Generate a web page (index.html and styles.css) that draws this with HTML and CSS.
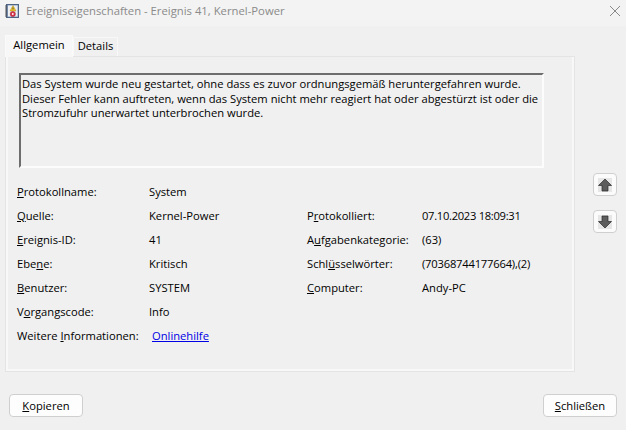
FILE: index.html
```html
<!DOCTYPE html>
<html lang="de">
<head>
<meta charset="utf-8">
<title>Ereigniseigenschaften</title>
<link rel="stylesheet" href="styles.css">
</head>
<body>
<div class="window">
  <header class="titlebar">
    <svg class="appicon" width="14" height="14" viewBox="0 0 14 14">
      <rect x="1.5" y="0.5" width="12" height="13" fill="#7f9cc4" stroke="#4f6384"/>
      <rect x="3" y="1.5" width="9.5" height="11" fill="#eef0f2"/>
      <path d="M0 2h2.5M0 4h2.5M0 6h2.5M0 8h2.5M0 10h2.5M0 12h2.5" stroke="#555" stroke-width="1" fill="none"/>
      <path d="M8 1.5l3 5.5h-6z" fill="#f3c72c" stroke="#a98510" stroke-width=".5"/>
      <rect x="7.6" y="3.5" width=".8" height="2" fill="#333"/>
      <circle cx="7.8" cy="10" r="2.6" fill="#d8344a" stroke="#9a1f30" stroke-width=".5"/>
      <circle cx="7.8" cy="10" r=".9" fill="#fff"/>
    </svg>
    <span class="title">Ereigniseigenschaften - Ereignis 41, Kernel-Power</span>
    <svg class="close" width="10" height="10" viewBox="0 0 10 10"><path d="M0 0l10 10M10 0L0 10" stroke="#8a8a8a" stroke-width="1" fill="none"/></svg>
  </header>
  <div class="content">
    <div class="main">
      <div class="tabs">
        <div class="tab active">Allgemein</div>
        <div class="tab">Details</div>
      </div>
      <section class="panel">
        <div class="description">Das System wurde neu gestartet, ohne dass es zuvor ordnungsgemäß heruntergefahren wurde. Dieser Fehler kann auftreten, wenn das System nicht mehr reagiert hat oder abgestürzt ist oder die Stromzufuhr unerwartet unterbrochen wurde.</div>
        <div class="fields">
          <span class="label"><u>P</u>rotokollname:</span><span class="value">System</span><span></span><span></span>
          <span class="label"><u>Q</u>uelle:</span><span class="value">Kernel-Power</span><span class="label">P<u>r</u>otokolliert:</span><span class="value num">07.10.2023 18:09:31</span>
          <span class="label"><u>E</u>reignis-ID:</span><span class="value">41</span><span class="label">A<u>u</u>fgabenkategorie:</span><span class="value">(63)</span>
          <span class="label">Ebe<u>n</u>e:</span><span class="value">Kritisch</span><span class="label">Schl<u>ü</u>sselwörter:</span><span class="value num-tight">(70368744177664),(2)</span>
          <span class="label"><u>B</u>enutzer:</span><span class="value">SYSTEM</span><span class="label"><u>C</u>omputer:</span><span class="value">Andy-PC</span>
          <span class="label">V<u>o</u>rgangscode:</span><span class="value">Info</span><span></span><span></span>
          <span class="label">Weitere <u>I</u>nformationen:</span><a class="value link" href="#">Onlinehilfe</a><span></span><span></span>
        </div>
      </section>
    </div>
    <aside class="side">
      <button class="arrow" type="button" aria-label="Nach oben"><svg width="14" height="14" viewBox="0 0 14 14"><rect width="14" height="14" fill="#e6e6e6"/><path d="M7 1L13.5 7.5H10V13H4V7.5H0.5z" fill="#5c5c5c" stroke="#2a2a2a" stroke-width=".7"/></svg></button>
      <button class="arrow" type="button" aria-label="Nach unten"><svg width="14" height="14" viewBox="0 0 14 14"><rect width="14" height="14" fill="#e6e6e6"/><path d="M7 13L13.5 6.5H10V1H4V6.5H0.5z" fill="#5c5c5c" stroke="#2a2a2a" stroke-width=".7"/></svg></button>
    </aside>
  </div>
  <footer class="footer">
    <button class="btn" type="button"><u>K</u>opieren</button>
    <button class="btn" type="button"><u>S</u>chließen</button>
  </footer>
</div>
</body>
</html>
```
FILE: styles.css
```css
* { box-sizing: border-box; }
html, body { margin: 0; height: 100%; }
body {
  background: #f0f0f0;
  font-family: "Open Sans", "Noto Sans", sans-serif;
  font-size: 11.2px;
  color: #000;
  overflow: hidden;
}
.window { width: 626px; height: 430px; display: flex; flex-direction: column; }
.titlebar {
  height: 26px;
  background: #f3f3f3;
  display: flex;
  align-items: center;
  padding: 0 6px 5px 5px;
  gap: 7px;
}
.title { flex: 1; color: #8a8a8a; font-size: 11.3px; }
.content { display: flex; padding: 11px 0 0 5px; }
.main { width: 570px; }
.tabs { display: flex; height: 19px; align-items: flex-end; }
.tab {
  width: 45px;
  height: 19px;
  text-align: center;
  line-height: 16px;
  background: #f0f0f0;
  border: 1px solid #f8f8f8;
  border-bottom: 0;
}
.tab.active {
  width: 68px;
  height: 22px;
  line-height: 18px;
  background: #f7f7f7;
  border-color: #fafafa;
  margin-bottom: -1px;
  position: relative;
}
.panel {
  height: 316px;
  border: 3px solid #f8f8f8;
  border-top-width: 1px;
  outline: 1px solid #e4e4e4;
  outline-offset: -1px;
  padding: 16px 0 0 11px;
}
.description {
  width: 525px;
  height: 95px;
  padding: 2px 1px;
  line-height: 14.6px;
  border: 2px solid;
  border-color: #6d6d6d #fcfcfc #fcfcfc #6d6d6d;
}
.fields {
  display: grid;
  grid-template-columns: 132px 158px 115px auto;
  grid-auto-rows: 24px;
  margin: 11px 0 0 -2px;
  align-items: center;
}
.fields span, .fields a { white-space: nowrap; }
.num { letter-spacing: -0.3px; }
.num-tight { letter-spacing: -0.2px; }
.link { color: #0000e6; margin-left: 3px; }
.side { display: flex; flex-direction: column; gap: 14px; padding: 136px 0 0 18px; }
.arrow {
  width: 24px; height: 23px; padding: 0;
  display: flex; align-items: center; justify-content: center;
  background: #fbfbfb;
  border: 1px solid #cfcfcf;
  border-radius: 4px;
}
.footer { display: flex; justify-content: space-between; padding: 22px 9px 0; }
.btn {
  width: 74px; height: 23px; padding: 0;
  font: inherit;
  background: #fdfdfd;
  color: #000;
  border: 1px solid #cfcfcf;
  border-radius: 4px;
}
```
